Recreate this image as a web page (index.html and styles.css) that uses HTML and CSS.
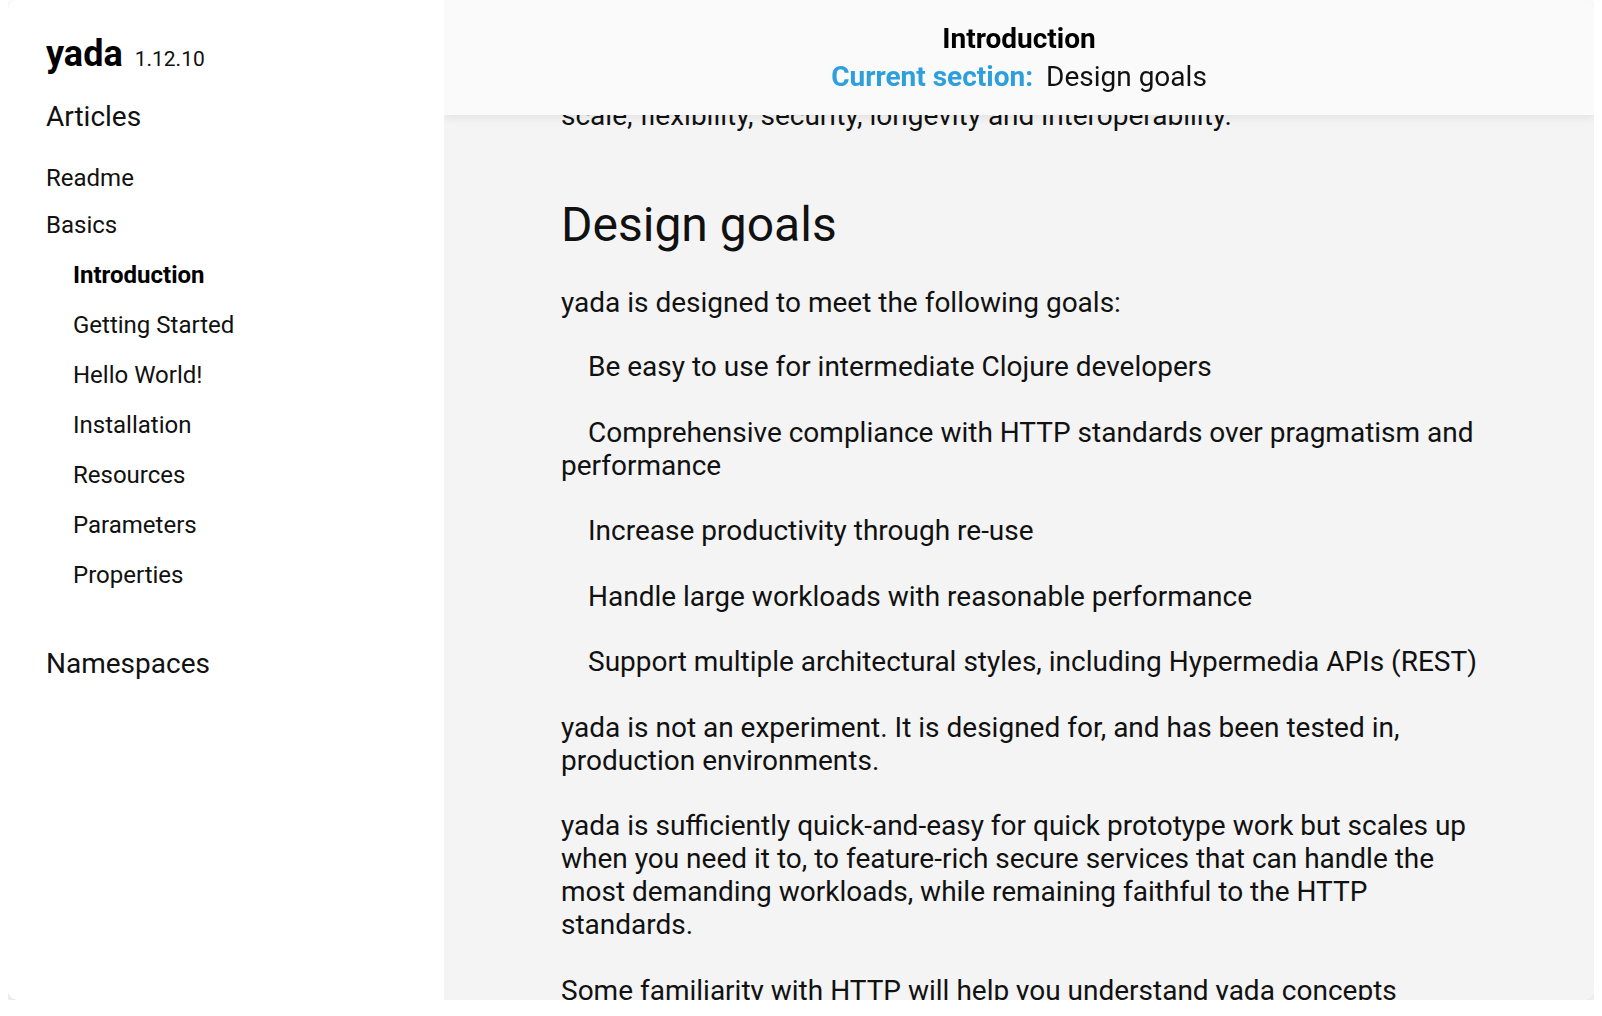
FILE: index.html
```html
<!DOCTYPE html>
<html lang="en">
<head>
  <meta charset="UTF-8" />
  <meta name="viewport" content="width=device-width, initial-scale=1.0"/>
  <title>yada - Introduction</title>
  <link rel="stylesheet" href="styles.css">
</head>
<body>

  <div class="card">
    <nav class="sidebar">
      <div class="brand">
        <span class="brand-name">yada</span>
        <span class="brand-version">1.12.10</span>
      </div>

      <h2 class="nav-title">Articles</h2>
      <ul class="nav-list">
        <li><a href="#">Readme</a></li>
        <li>
          <a href="#">Basics</a>
          <ul class="nav-sub">
            <li class="active"><a href="#">Introduction</a></li>
            <li><a href="#">Getting Started</a></li>
            <li><a href="#">Hello World!</a></li>
            <li><a href="#">Installation</a></li>
            <li><a href="#">Resources</a></li>
            <li><a href="#">Parameters</a></li>
            <li><a href="#">Properties</a></li>
          </ul>
        </li>
      </ul>

      <h2 class="nav-title nav-namespaces">Namespaces</h2>
    </nav>

    <main class="main">
      <header class="topbar">
        <div class="topbar-title">Introduction</div>
        <div class="topbar-section"><span class="label">Current section:</span>Design goals</div>
      </header>

      <article class="content">
        <p class="cut">scale, flexibility, security, longevity and interoperability.</p>

        <h2>Design goals</h2>

        <p>yada is designed to meet the following goals:</p>

        <ul class="goals">
          <li>Be easy to use for intermediate Clojure developers</li>
          <li>Comprehensive compliance with HTTP standards over pragmatism and performance</li>
          <li>Increase productivity through re-use</li>
          <li>Handle large workloads with reasonable performance</li>
          <li>Support multiple architectural styles, including Hypermedia APIs (REST)</li>
        </ul>

        <p>yada is not an experiment. It is designed for, and has been tested in, production environments.</p>

        <p>yada is sufficiently quick-and-easy for quick prototype work but scales up when you need it to, to feature-rich secure services that can handle the most demanding workloads, while remaining faithful to the HTTP standards.</p>

        <p class="last">Some familiarity with HTTP will help you understand yada concepts quicker, but is not essential.</p>
      </article>
    </main>
  </div>

</body>
</html>
```

FILE: styles.css
```css
body {
  font-family: Roboto, "Liberation Sans", Arial, sans-serif;
  background-color: #fff;
  color: #111;
  margin: 0 8px;
}

.card {
  display: flex;
  height: 1000px;
  border-radius: 10px;
  overflow: hidden;
  background-color: #fff;
  box-shadow: 0 5px 14px rgba(0, 0, 0, 0.16);
}

/* sidebar */
.sidebar {
  width: 360px;
  flex-shrink: 0;
  padding: 34px 38px;
  background-color: #fff;
}

.brand {
  display: flex;
  align-items: baseline;
  gap: 12px;
  line-height: 41px;
}

.brand-name {
  font-size: 36px;
  font-weight: bold;
  color: #000;
}

.brand-version {
  font-size: 21px;
  line-height: 1;
}

.nav-title {
  font-size: 28px;
  font-weight: normal;
  line-height: 33px;
  margin: 25px 0 0;
}

.nav-list {
  list-style: none;
  margin: 31px 0 0;
  padding: 0;
  font-size: 24px;
  line-height: 28px;
}

.nav-list > li + li {
  margin-top: 19px;
}

.nav-list a {
  color: #111;
  text-decoration: none;
}

.nav-sub {
  list-style: none;
  margin: 22px 0 0;
  padding: 0 0 0 27px;
}

.nav-sub li + li {
  margin-top: 22px;
}

.nav-sub .active a {
  font-weight: bold;
  color: #000;
}

.nav-namespaces {
  margin-top: 58px;
}

/* main column */
.main {
  flex: 1;
  min-width: 0;
  background-color: #f4f4f4;
  overflow: hidden;
}

.topbar {
  position: sticky;
  top: 0;
  z-index: 1;
  padding: 20px 0 19px;
  text-align: center;
  font-size: 28px;
  line-height: 38px;
  background-color: #fafafa;
  box-shadow: 0 3px 8px rgba(0, 0, 0, 0.07);
}

.topbar-title {
  font-weight: bold;
  color: #000;
}

.label {
  color: #2d9fdc;
  font-weight: bold;
  margin-right: 13px;
}

.content {
  margin-top: -16px;
  padding: 0 100px 0 117px;
  font-size: 28px;
  line-height: 33px;
}

.content p {
  margin: 32.5px 0;
}

.content p.cut {
  margin-top: 0;
}

.content p.last {
  margin-top: 29px;
}

.content h2 {
  font-size: 48px;
  font-weight: normal;
  line-height: normal;
  margin: 64px 0 33px;
}

.content h2 + p {
  margin-bottom: 31px;
}

.goals {
  list-style: none;
  margin: 31px 0 32.5px;
  padding: 0;
}

.goals li {
  margin: 32.5px 0;
  text-indent: 27px;
}

.goals li:first-child {
  margin-top: 31px;
}
```
